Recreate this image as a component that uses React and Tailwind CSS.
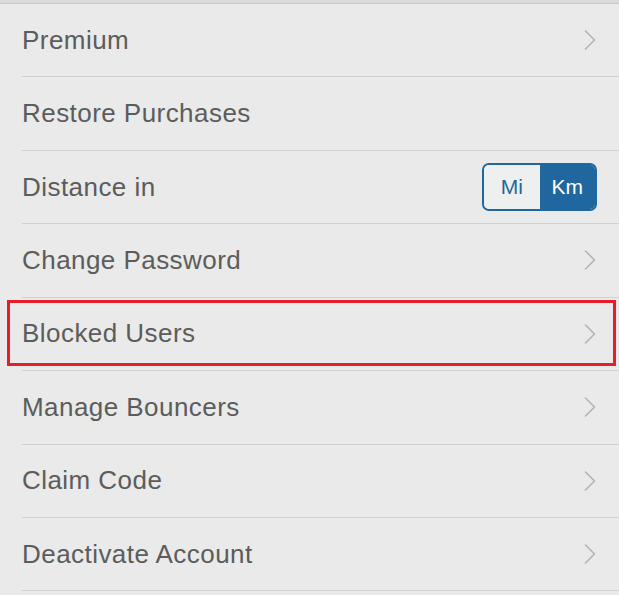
import { useState } from 'react'

const rows = [
  { label: 'Premium', chevron: true },
  { label: 'Restore Purchases' },
  { label: 'Distance in', toggle: true },
  { label: 'Change Password', chevron: true },
  { label: 'Blocked Users', chevron: true, highlight: true },
  { label: 'Manage Bouncers', chevron: true },
  { label: 'Claim Code', chevron: true },
  { label: 'Deactivate Account', chevron: true },
]

function Chevron() {
  return (
    <svg width="14" height="22" viewBox="0 0 14 22" fill="none" className="shrink-0">
      <path d="M2.5 2 L11.5 11 L2.5 20" stroke="#b2b3b2" strokeWidth="1.6" strokeLinecap="round" strokeLinejoin="round" />
    </svg>
  )
}

function UnitToggle() {
  const [unit, setUnit] = useState('km')
  return (
    <div className="flex h-[48px] w-[115px] overflow-hidden rounded-[7px] border-2 border-[#1f679e] text-[21px]">
      <button
        onClick={() => setUnit('mi')}
        className={
          unit === 'mi'
            ? 'flex-1 bg-[#1f679e] text-white'
            : 'flex-1 bg-[#eef0ef] text-[#1f679e]'
        }
      >
        Mi
      </button>
      <button
        onClick={() => setUnit('km')}
        className={
          unit === 'km'
            ? 'flex-1 bg-[#1f679e] text-white'
            : 'flex-1 bg-[#eef0ef] text-[#1f679e]'
        }
      >
        Km
      </button>
    </div>
  )
}

export default function App() {
  return (
    <div className="min-h-[595px] w-[619px] bg-[#e9eae9] font-['Liberation_Sans',Arial,sans-serif]">
      <div className="h-[3px] bg-[#d9dad9]" />
      <div className="border-t border-[#c9cac9]">
        {rows.map((row) => (
          <div key={row.label} className="relative h-[73.43px] pl-[22px]">
            <div className="flex h-full items-center justify-between border-b border-[#cfd0cf] pr-[22px]">
              <span className="text-[26px] tracking-[0.45px] text-[#5c5c5c]">{row.label}</span>
              {row.chevron && <Chevron />}
              {row.toggle && <UnitToggle />}
            </div>
            {row.highlight && (
              <div className="pointer-events-none absolute left-[7px] right-[3px] top-[2px] bottom-[5px] border-[3px] border-[#e41f29]" />
            )}
          </div>
        ))}
      </div>
    </div>
  )
}
